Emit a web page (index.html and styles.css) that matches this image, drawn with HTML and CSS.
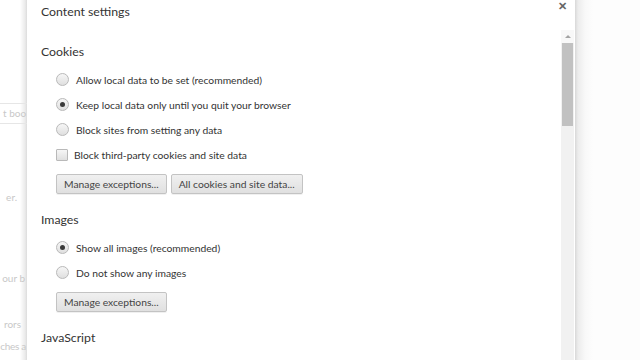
FILE: index.html
```html
<!DOCTYPE html>
<html lang="en">
<head>
    <meta charset="UTF-8">
    <title>Content settings</title>
    <link rel="stylesheet" href="styles.css">
</head>
<body>
<div class="screen">
    <!-- Settings page behind the overlay -->
    <div class="page-left">
        <div class="page-input">t boo</div>
        <div class="page-line l1">er.</div>
        <div class="page-line l2">our b</div>
        <div class="page-line l3">rors</div>
        <div class="page-line l4">ches a</div>
    </div>

    <!-- The dialog -->
    <div class="dialog">
        <div class="content">
            <h1 class="title">Content settings</h1>

            <section class="group">
                <h2>Cookies</h2>
                <label class="option"><span class="radio"></span>Allow local data to be set (recommended)</label>
                <label class="option"><span class="radio checked"></span>Keep local data only until you quit your browser</label>
                <label class="option"><span class="radio"></span>Block sites from setting any data</label>
                <label class="option"><span class="check"></span>Block third-party cookies and site data</label>
                <div class="buttons">
                    <button class="btn">Manage exceptions...</button>
                    <button class="btn">All cookies and site data...</button>
                </div>
            </section>

            <section class="group">
                <h2>Images</h2>
                <label class="option"><span class="radio checked"></span>Show all images (recommended)</label>
                <label class="option"><span class="radio"></span>Do not show any images</label>
                <div class="buttons">
                    <button class="btn">Manage exceptions...</button>
                </div>
            </section>

            <section class="group">
                <h2>JavaScript</h2>
            </section>
        </div>

        <div class="scrollbar">
            <div class="scroll-up"></div>
            <div class="scroll-thumb"></div>
        </div>

        <span class="close">&#x2715;</span>
    </div>

    <div class="page-right"></div>
</div>
</body>
</html>
```

FILE: styles.css
```css
* {
    margin: 0;
    padding: 0;
    box-sizing: border-box;
}

body {
    background: #fff;
    font-family: Lato, "Open Sans", sans-serif;
    color: #333;
    overflow: hidden;
}

.screen {
    display: flex;
    width: 640px;
    height: 360px;
}

/* Hintergrundseite links */
.page-left {
    width: 27px;
    flex-shrink: 0;
    overflow: hidden;
    position: relative;
    background: linear-gradient(to right, #fff 0, #fff 20px, #ebebeb 25px, #dcdcdc 27px);
    color: #c8c8c8;
    font-size: 10px;
    white-space: nowrap;
}

.page-input {
    position: absolute;
    right: 0;
    left: -2px;
    top: 103px;
    height: 21px;
    line-height: 19px;
    padding-left: 4px;
    border: 1px solid #e6e6e6;
    border-right: none;
}

.page-line {
    position: absolute;
}

.l1 { top: 191px; right: 10px; }
.l2 { top: 272px; right: 2px; }
.l3 { top: 318px; right: 6px; }
.l4 { top: 340px; right: 1px; letter-spacing: -0.3px; }

/* Dialog */
.dialog {
    position: relative;
    width: 548px;
    flex-shrink: 0;
    display: flex;
    background: #fff;
}

.content {
    flex: 1;
    padding: 3px 0 0 14px;
}

.title {
    font-size: 12.3px;
    line-height: 18px;
    font-weight: normal;
    color: #333;
    height: 40px;
}

.group h2 {
    font-size: 12.3px;
    line-height: 18px;
    font-weight: normal;
    color: #333;
    height: 24px;
}

.group {
    margin-bottom: 9px;
}

.option {
    display: flex;
    align-items: center;
    height: 25px;
    padding-left: 15px;
    font-size: 10.3px;
    color: #333;
}

.radio {
    width: 13px;
    height: 13px;
    border-radius: 50%;
    border: 1px solid #b9b9b9;
    background: linear-gradient(#f6f6f6, #dfdfdf);
    margin-right: 7px;
    display: flex;
    align-items: center;
    justify-content: center;
}

.radio.checked::after {
    content: "";
    width: 5px;
    height: 5px;
    border-radius: 50%;
    background: #3a3a3a;
}

.check {
    width: 12px;
    height: 12px;
    border: 1px solid #b9b9b9;
    border-radius: 1px;
    background: linear-gradient(#f6f6f6, #dfdfdf);
    margin-right: 6px;
}

.buttons {
    display: flex;
    gap: 4px;
    padding: 7px 0 0 15px;
    height: 35px;
}

.btn {
    height: 20px;
    padding: 0 7px;
    font-family: inherit;
    font-size: 10.3px;
    color: #444;
    border: 1px solid #c3c3c3;
    border-radius: 2px;
    background: linear-gradient(#f0f0f0, #e0e0e0);
    box-shadow: 0 1px 0 rgba(0, 0, 0, 0.06);
}

/* Scrollbar */
.scrollbar {
    width: 13px;
    margin: 30px 1px 0 0;
    background: #f1f1f1;
    display: flex;
    flex-direction: column;
}

.scroll-up {
    height: 13px;
    position: relative;
    background: #f8f8f8;
}

.scroll-up::after {
    content: "";
    position: absolute;
    left: 4px;
    top: 5px;
    border: 3px solid transparent;
    border-top: none;
    border-bottom: 3px solid #a3a3a3;
}

.scroll-thumb {
    height: 83px;
    margin: 0 1px;
    background: #c1c1c1;
}

.close {
    position: absolute;
    right: 8px;
    top: 0;
    font-size: 11px;
    line-height: 11px;
    font-weight: bold;
    color: #666;
}

/* Hintergrundseite rechts */
.page-right {
    flex: 1;
    background: linear-gradient(to right, #d8d8d8 0, #ececec 3px, #f8f8f8 10px, #fdfdfd 18px, #fdfdfd);
}
```
